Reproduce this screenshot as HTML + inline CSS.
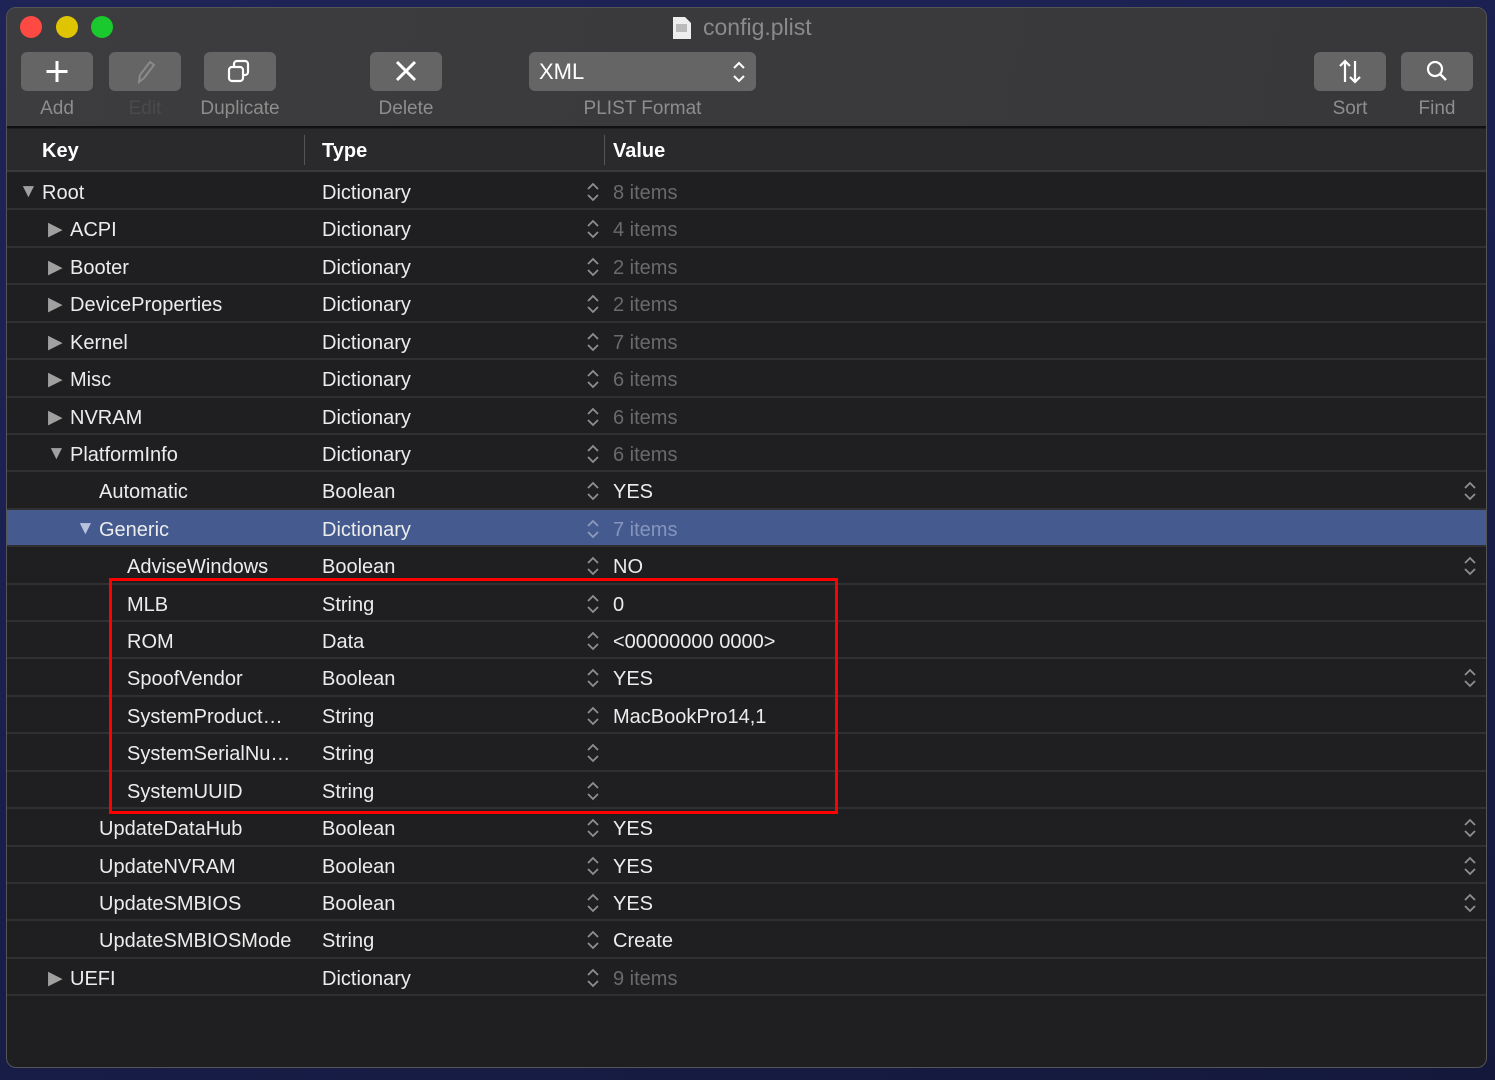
<!DOCTYPE html>
<html><head><meta charset="utf-8"><style>
*{margin:0;padding:0;box-sizing:border-box}
body{width:1495px;height:1080px;background:linear-gradient(160deg,#1e2456 0%,#1a2050 40%,#14193c 100%);position:relative;overflow:hidden;font-family:"Liberation Sans","DejaVu Sans",sans-serif}
.win{position:absolute;left:6px;top:7px;width:1481px;height:1061px;border-radius:10px;background:#1f1f21;overflow:hidden;border:1px solid #555}
.tb{position:absolute;left:0;top:0;width:100%;height:120px;background:linear-gradient(100deg,#3d3d3f,#3a3a3c 50%,#38383a);border-bottom:2px solid #111}
.dot{position:absolute;top:8px;width:22px;height:22px;border-radius:50%}
.btn{position:absolute;top:44px;height:39px;background:#656566;border-radius:6px}
.lbl{position:absolute;top:90px;font-size:19px;color:#8d8d8d;text-align:center}
.hdr{position:absolute;left:0;top:121px;width:100%;height:43px;background:#2a2a2c;border-bottom:2px solid #3a3a3c;color:#fff;font-size:20px;font-weight:bold}
.rows{position:absolute;left:0;top:165px;width:100%}
.r{height:37.43px;border-bottom:2px solid #303032;position:relative;color:#ececec;font-size:20px}
.r span{position:absolute;top:9px;white-space:nowrap}
.sel{background:#455a8f}
.g{color:#6a6a6c}
.sel .g{color:#8595bd}
.st{position:absolute;top:7px;width:14px;height:24px}
.tri{position:absolute;top:8px;font-size:19px;color:#a0a0a0;font-style:normal}
</style></head><body>
<div class="win">
<div class="tb">
<div class="dot" style="left:13px;background:#fe4a43"></div>
<div class="dot" style="left:49px;background:#dfc402"></div>
<div class="dot" style="left:84px;background:#1ac92d"></div>
<svg style="position:absolute;left:665px;top:8px" width="20" height="24"><path d="M1 1h12l6 6v16H1z" fill="#eee"/><rect x="4" y="8" width="11" height="8" fill="#bbb"/></svg>
<div style="position:absolute;left:696px;top:6px;font-size:23px;color:#8a8a8a">config.plist</div>
<div class="btn" style="left:14px;width:72px"><svg width="72" height="39"><path d="M36 9v21M25.5 19.5h21" stroke="#fff" stroke-width="3"/></svg></div>
<div class="btn" style="left:102px;width:72px"><svg width="72" height="39"><path d="M30 30l1-7 10-13 4 3-10 13z" fill="none" stroke="#8a8a8a" stroke-width="2"/></svg></div>
<div class="btn" style="left:197px;width:72px"><svg width="72" height="39"><rect x="25" y="15" width="14" height="14" rx="3" fill="none" stroke="#fff" stroke-width="2.2"/><path d="M30 15v-3a3 3 0 0 1 3-3h8a3 3 0 0 1 3 3v8a3 3 0 0 1-3 3h-2" fill="none" stroke="#fff" stroke-width="2.2"/></svg></div>
<div class="btn" style="left:363px;width:72px"><svg width="72" height="39"><path d="M27 10l18 18M45 10L27 28" stroke="#fff" stroke-width="3"/></svg></div>
<div class="btn" style="left:522px;width:227px"><span style="position:absolute;left:10px;top:7px;font-size:22px;color:#fff">XML</span><svg style="position:absolute;left:202px;top:7px" width="16" height="26"><path d="M3 9l5-5 5 5M3 17l5 5 5-5" fill="none" stroke="#fff" stroke-width="2"/></svg></div>
<div class="btn" style="left:1307px;width:72px"><svg width="72" height="39"><path d="M31 30V9M26 14l5-5 5 5M41 9v21M36 25l5 5 5-5" fill="none" stroke="#fff" stroke-width="2.2"/></svg></div>
<div class="btn" style="left:1394px;width:72px"><svg width="72" height="39"><circle cx="34" cy="17" r="7" fill="none" stroke="#fff" stroke-width="2.2"/><path d="M39 22l6 6" stroke="#fff" stroke-width="2.4"/></svg></div>
<div class="lbl" style="left:14px;width:72px">Add</div>
<div class="lbl" style="left:102px;width:72px;color:#4a4a4c">Edit</div>
<div class="lbl" style="left:178px;width:110px">Duplicate</div>
<div class="lbl" style="left:363px;width:72px">Delete</div>
<div class="lbl" style="left:522px;width:227px">PLIST Format</div>
<div class="lbl" style="left:1307px;width:72px">Sort</div>
<div class="lbl" style="left:1394px;width:72px">Find</div>
</div>
<div class="hdr"><span style="position:absolute;left:35px;top:11px">Key</span><div style="position:absolute;left:297px;top:6px;width:1px;height:30px;background:#555"></div><span style="position:absolute;left:315px;top:11px">Type</span><div style="position:absolute;left:597px;top:6px;width:1px;height:30px;background:#555"></div><span style="position:absolute;left:606px;top:11px">Value</span></div>
<div class="rows" id="rows">
<div class="r"><i class="tri" style="left:12px">▼</i><span style="left:35px">Root</span><span style="left:315px">Dictionary</span><svg class="st" style="left:579px"><path d="M2 9l5-5 5 5M2 15l5 5 5-5" fill="none" stroke="#8e8e8e" stroke-width="1.8"/></svg><span class="g" style="left:606px">8 items</span></div>
<div class="r"><i class="tri" style="left:41px">▶</i><span style="left:63px">ACPI</span><span style="left:315px">Dictionary</span><svg class="st" style="left:579px"><path d="M2 9l5-5 5 5M2 15l5 5 5-5" fill="none" stroke="#8e8e8e" stroke-width="1.8"/></svg><span class="g" style="left:606px">4 items</span></div>
<div class="r"><i class="tri" style="left:41px">▶</i><span style="left:63px">Booter</span><span style="left:315px">Dictionary</span><svg class="st" style="left:579px"><path d="M2 9l5-5 5 5M2 15l5 5 5-5" fill="none" stroke="#8e8e8e" stroke-width="1.8"/></svg><span class="g" style="left:606px">2 items</span></div>
<div class="r"><i class="tri" style="left:41px">▶</i><span style="left:63px">DeviceProperties</span><span style="left:315px">Dictionary</span><svg class="st" style="left:579px"><path d="M2 9l5-5 5 5M2 15l5 5 5-5" fill="none" stroke="#8e8e8e" stroke-width="1.8"/></svg><span class="g" style="left:606px">2 items</span></div>
<div class="r"><i class="tri" style="left:41px">▶</i><span style="left:63px">Kernel</span><span style="left:315px">Dictionary</span><svg class="st" style="left:579px"><path d="M2 9l5-5 5 5M2 15l5 5 5-5" fill="none" stroke="#8e8e8e" stroke-width="1.8"/></svg><span class="g" style="left:606px">7 items</span></div>
<div class="r"><i class="tri" style="left:41px">▶</i><span style="left:63px">Misc</span><span style="left:315px">Dictionary</span><svg class="st" style="left:579px"><path d="M2 9l5-5 5 5M2 15l5 5 5-5" fill="none" stroke="#8e8e8e" stroke-width="1.8"/></svg><span class="g" style="left:606px">6 items</span></div>
<div class="r"><i class="tri" style="left:41px">▶</i><span style="left:63px">NVRAM</span><span style="left:315px">Dictionary</span><svg class="st" style="left:579px"><path d="M2 9l5-5 5 5M2 15l5 5 5-5" fill="none" stroke="#8e8e8e" stroke-width="1.8"/></svg><span class="g" style="left:606px">6 items</span></div>
<div class="r"><i class="tri" style="left:40px">▼</i><span style="left:63px">PlatformInfo</span><span style="left:315px">Dictionary</span><svg class="st" style="left:579px"><path d="M2 9l5-5 5 5M2 15l5 5 5-5" fill="none" stroke="#8e8e8e" stroke-width="1.8"/></svg><span class="g" style="left:606px">6 items</span></div>
<div class="r"><span style="left:92px">Automatic</span><span style="left:315px">Boolean</span><svg class="st" style="left:579px"><path d="M2 9l5-5 5 5M2 15l5 5 5-5" fill="none" stroke="#8e8e8e" stroke-width="1.8"/></svg><span style="left:606px">YES</span><svg class="st" style="left:1456px"><path d="M2 9l5-5 5 5M2 15l5 5 5-5" fill="none" stroke="#8e8e8e" stroke-width="1.8"/></svg></div>
<div class="r sel"><i class="tri" style="left:69px;color:#b8c2dc">▼</i><span style="left:92px">Generic</span><span style="left:315px">Dictionary</span><svg class="st" style="left:579px"><path d="M2 9l5-5 5 5M2 15l5 5 5-5" fill="none" stroke="#8e9abb" stroke-width="1.8"/></svg><span class="g" style="left:606px">7 items</span></div>
<div class="r"><span style="left:120px">AdviseWindows</span><span style="left:315px">Boolean</span><svg class="st" style="left:579px"><path d="M2 9l5-5 5 5M2 15l5 5 5-5" fill="none" stroke="#8e8e8e" stroke-width="1.8"/></svg><span style="left:606px">NO</span><svg class="st" style="left:1456px"><path d="M2 9l5-5 5 5M2 15l5 5 5-5" fill="none" stroke="#8e8e8e" stroke-width="1.8"/></svg></div>
<div class="r"><span style="left:120px">MLB</span><span style="left:315px">String</span><svg class="st" style="left:579px"><path d="M2 9l5-5 5 5M2 15l5 5 5-5" fill="none" stroke="#8e8e8e" stroke-width="1.8"/></svg><span style="left:606px">0</span></div>
<div class="r"><span style="left:120px">ROM</span><span style="left:315px">Data</span><svg class="st" style="left:579px"><path d="M2 9l5-5 5 5M2 15l5 5 5-5" fill="none" stroke="#8e8e8e" stroke-width="1.8"/></svg><span style="left:606px">&lt;00000000 0000&gt;</span></div>
<div class="r"><span style="left:120px">SpoofVendor</span><span style="left:315px">Boolean</span><svg class="st" style="left:579px"><path d="M2 9l5-5 5 5M2 15l5 5 5-5" fill="none" stroke="#8e8e8e" stroke-width="1.8"/></svg><span style="left:606px">YES</span><svg class="st" style="left:1456px"><path d="M2 9l5-5 5 5M2 15l5 5 5-5" fill="none" stroke="#8e8e8e" stroke-width="1.8"/></svg></div>
<div class="r"><span style="left:120px">SystemProduct…</span><span style="left:315px">String</span><svg class="st" style="left:579px"><path d="M2 9l5-5 5 5M2 15l5 5 5-5" fill="none" stroke="#8e8e8e" stroke-width="1.8"/></svg><span style="left:606px">MacBookPro14,1</span></div>
<div class="r"><span style="left:120px">SystemSerialNu…</span><span style="left:315px">String</span><svg class="st" style="left:579px"><path d="M2 9l5-5 5 5M2 15l5 5 5-5" fill="none" stroke="#8e8e8e" stroke-width="1.8"/></svg></div>
<div class="r"><span style="left:120px">SystemUUID</span><span style="left:315px">String</span><svg class="st" style="left:579px"><path d="M2 9l5-5 5 5M2 15l5 5 5-5" fill="none" stroke="#8e8e8e" stroke-width="1.8"/></svg></div>
<div class="r"><span style="left:92px">UpdateDataHub</span><span style="left:315px">Boolean</span><svg class="st" style="left:579px"><path d="M2 9l5-5 5 5M2 15l5 5 5-5" fill="none" stroke="#8e8e8e" stroke-width="1.8"/></svg><span style="left:606px">YES</span><svg class="st" style="left:1456px"><path d="M2 9l5-5 5 5M2 15l5 5 5-5" fill="none" stroke="#8e8e8e" stroke-width="1.8"/></svg></div>
<div class="r"><span style="left:92px">UpdateNVRAM</span><span style="left:315px">Boolean</span><svg class="st" style="left:579px"><path d="M2 9l5-5 5 5M2 15l5 5 5-5" fill="none" stroke="#8e8e8e" stroke-width="1.8"/></svg><span style="left:606px">YES</span><svg class="st" style="left:1456px"><path d="M2 9l5-5 5 5M2 15l5 5 5-5" fill="none" stroke="#8e8e8e" stroke-width="1.8"/></svg></div>
<div class="r"><span style="left:92px">UpdateSMBIOS</span><span style="left:315px">Boolean</span><svg class="st" style="left:579px"><path d="M2 9l5-5 5 5M2 15l5 5 5-5" fill="none" stroke="#8e8e8e" stroke-width="1.8"/></svg><span style="left:606px">YES</span><svg class="st" style="left:1456px"><path d="M2 9l5-5 5 5M2 15l5 5 5-5" fill="none" stroke="#8e8e8e" stroke-width="1.8"/></svg></div>
<div class="r"><span style="left:92px">UpdateSMBIOSMode</span><span style="left:315px">String</span><svg class="st" style="left:579px"><path d="M2 9l5-5 5 5M2 15l5 5 5-5" fill="none" stroke="#8e8e8e" stroke-width="1.8"/></svg><span style="left:606px">Create</span></div>
<div class="r"><i class="tri" style="left:41px">▶</i><span style="left:63px">UEFI</span><span style="left:315px">Dictionary</span><svg class="st" style="left:579px"><path d="M2 9l5-5 5 5M2 15l5 5 5-5" fill="none" stroke="#8e8e8e" stroke-width="1.8"/></svg><span class="g" style="left:606px">9 items</span></div>
</div>
</div>
<div style="position:absolute;left:109px;top:578px;width:729px;height:236px;border:3px solid #ff0000"></div>
</body></html>
